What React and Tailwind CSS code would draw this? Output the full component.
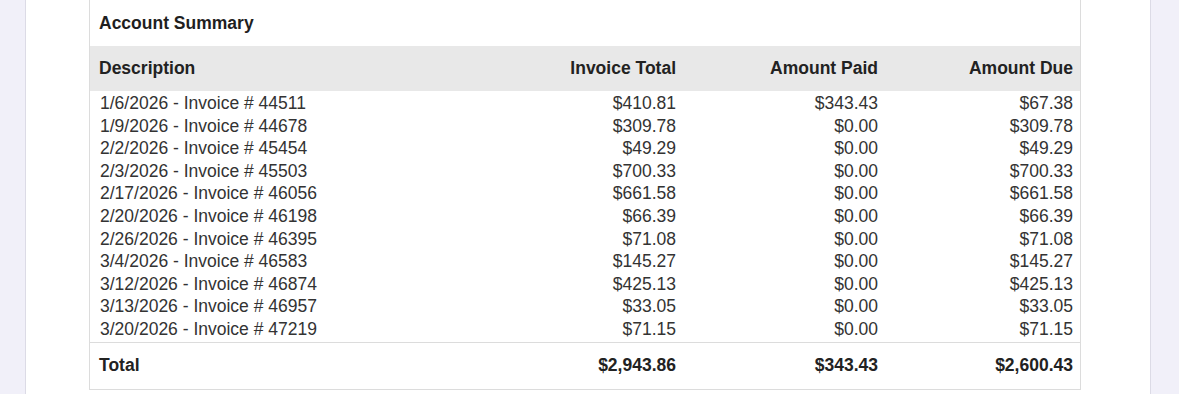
import React from 'react';

const rows = [
  ['1/6/2026 - Invoice # 44511', '$410.81', '$343.43', '$67.38'],
  ['1/9/2026 - Invoice # 44678', '$309.78', '$0.00', '$309.78'],
  ['2/2/2026 - Invoice # 45454', '$49.29', '$0.00', '$49.29'],
  ['2/3/2026 - Invoice # 45503', '$700.33', '$0.00', '$700.33'],
  ['2/17/2026 - Invoice # 46056', '$661.58', '$0.00', '$661.58'],
  ['2/20/2026 - Invoice # 46198', '$66.39', '$0.00', '$66.39'],
  ['2/26/2026 - Invoice # 46395', '$71.08', '$0.00', '$71.08'],
  ['3/4/2026 - Invoice # 46583', '$145.27', '$0.00', '$145.27'],
  ['3/12/2026 - Invoice # 46874', '$425.13', '$0.00', '$425.13'],
  ['3/13/2026 - Invoice # 46957', '$33.05', '$0.00', '$33.05'],
  ['3/20/2026 - Invoice # 47219', '$71.15', '$0.00', '$71.15'],
];

const cols = 'grid grid-cols-[1fr_196px_202px_195px]';

export default function App() {
  return (
    <div
      className="h-[394px] w-[1179px] overflow-hidden bg-[#f1f0f9] pl-[25px] pr-[28px] flex"
      style={{ fontFamily: '"Liberation Sans", Arial, sans-serif' }}
    >
      {/* white page */}
      <div className="flex-1 bg-white border-x border-[#dcdbe6] pl-[63px] pr-[69px]">
        <div className="border-x border-b border-[#dcdcdc] text-[17.5px] pt-[1px]">
          {/* title */}
          <div className="h-[45px] flex items-center px-[9px] font-bold text-[#1f1f1f]">
            Account Summary
          </div>

          {/* column headers */}
          <div className={`${cols} h-[45px] items-center bg-[#e8e8e8] font-bold text-[#222] px-[9px] pr-[7px]`}>
            <div>Description</div>
            <div className="text-right">Invoice Total</div>
            <div className="text-right">Amount Paid</div>
            <div className="text-right">Amount Due</div>
          </div>

          {/* invoice lines */}
          <div className="pt-[1px] pb-[1.5px] text-[#333] leading-[22.6px]">
            {rows.map((r) => (
              <div key={r[0]} className={`${cols} pl-[10px] pr-[7px]`}>
                <div>{r[0]}</div>
                <div className="text-right">{r[1]}</div>
                <div className="text-right">{r[2]}</div>
                <div className="text-right">{r[3]}</div>
              </div>
            ))}
          </div>

          {/* totals */}
          <div className={`${cols} h-[47px] items-center border-t border-[#dcdcdc] font-bold text-[#222] pl-[9px] pr-[7px] pb-[2px]`}>
            <div>Total</div>
            <div className="text-right">$2,943.86</div>
            <div className="text-right">$343.43</div>
            <div className="text-right">$2,600.43</div>
          </div>
        </div>
      </div>
    </div>
  );
}
